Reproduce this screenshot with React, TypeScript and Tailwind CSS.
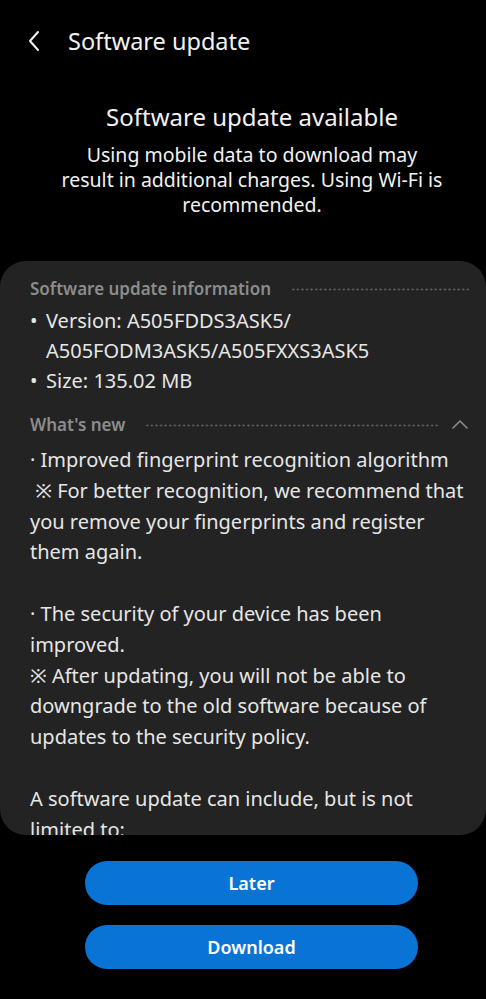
import { ReactNode } from "react";

function Dots() {
  return (
    <div className="flex-1 h-[3px] bg-[radial-gradient(circle,#5c5c5c_0.9px,transparent_1.2px)] bg-[length:4.6px_3px]" />
  );
}

function SectionHeader({ title, children }: { title: string; children?: ReactNode }) {
  return (
    <div className="flex items-center h-6 text-[17px] font-semibold text-[#8c8c8c]">
      <span className="whitespace-nowrap">{title}</span>
      <div className="flex-1 ml-5 flex items-center">
        <Dots />
      </div>
      {children}
    </div>
  );
}

function Bullet({ children }: { children: ReactNode }) {
  return (
    <div className="flex">
      <span className="w-4 shrink-0">•</span>
      <span>{children}</span>
    </div>
  );
}

const notes = [
  "· Improved fingerprint recognition algorithm",
  " ※ For better recognition, we recommend that",
  "you remove your fingerprints and register",
  "them again.",
  "",
  "· The security of your device has been",
  "improved.",
  "※ After updating, you will not be able to",
  "downgrade to the old software because of",
  "updates to the security policy.",
  "",
  "A software update can include, but is not",
  "limited to:",
];

export default function App() {
  return (
    <div
      className="w-[486px] h-[999px] bg-black text-[#f2f2f2] overflow-hidden flex flex-col"
      style={{ fontFamily: "'Noto Sans', Roboto, 'Noto Sans CJK JP', sans-serif" }}
    >
      <header className="h-[82px] flex items-center shrink-0">
        <svg className="ml-[26px] w-4 h-6" viewBox="0 0 16 24" fill="none">
          <path d="M12 3 L4 12 L12 21" stroke="#f2f2f2" strokeWidth="2" strokeLinecap="round" strokeLinejoin="round" />
        </svg>
        <h1 className="ml-[26px] text-[23.5px] leading-8">Software update</h1>
      </header>

      <div className="mt-[19px] text-center shrink-0 pl-[18px]">
        <h2 className="text-[24px] leading-8">Software update available</h2>
        <p className="mt-[9px] text-[19.5px] leading-[25px] whitespace-nowrap">
          Using mobile data to download may
          <br />
          result in additional charges. Using Wi-Fi is
          <br />
          recommended.
        </p>
      </div>

      <section className="mt-[44px] h-[574px] shrink-0 bg-[#232323] rounded-[26px] overflow-hidden pl-[30px] pr-[16px] pt-4">
        <SectionHeader title="Software update information" />
        <div className="mt-[5px] text-[20px] leading-[30px] text-[#e6e6e6]">
          <Bullet>
            Version: A505FDDS3ASK5/
            <br />
            A505FODM3ASK5/A505FXXS3ASK5
          </Bullet>
          <Bullet>Size: 135.02 MB</Bullet>
        </div>

        <div className="mt-[17px]">
          <SectionHeader title="What's new">
            <svg className="ml-3 w-5 h-4" viewBox="0 0 20 16" fill="none">
              <path d="M3 11 L10 4 L17 11" stroke="#8c8c8c" strokeWidth="1.6" strokeLinecap="round" strokeLinejoin="round" />
            </svg>
          </SectionHeader>
        </div>

        <div className="mt-2 text-[20px] leading-[30.8px] text-[#e6e6e6]">
          {notes.map((line, i) => (
            <div key={i} className="whitespace-pre h-[30.8px]">
              {line}
            </div>
          ))}
        </div>
      </section>

      <div className="mt-[26px] flex flex-col items-start pl-[85px] gap-5">
        <button className="w-[333px] h-[44px] rounded-full bg-[#0a74d6] text-white text-[18px] font-semibold">
          Later
        </button>
        <button className="w-[333px] h-[44px] rounded-full bg-[#0a74d6] text-white text-[18px] font-semibold">
          Download
        </button>
      </div>
    </div>
  );
}
